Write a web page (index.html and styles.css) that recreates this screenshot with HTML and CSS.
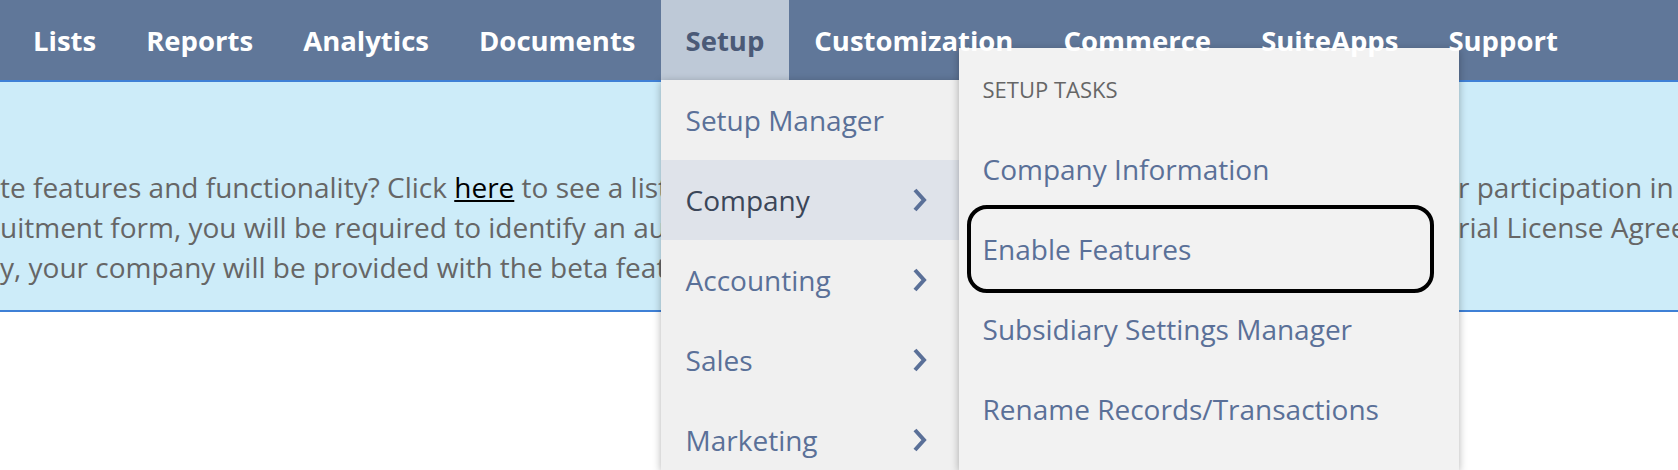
FILE: index.html
```html
<!DOCTYPE html>
<html lang="en">

<head>
    <meta charset="UTF-8">
    <meta name="viewport" content="width=device-width, initial-scale=1.0">
    <title>Setup</title>
    <link rel="stylesheet" href="styles.css">
</head>

<body>
    <header class="topnav">
        <ul class="topnav__list">
            <li class="topnav__item"><a href="#">Lists</a></li>
            <li class="topnav__item"><a href="#">Reports</a></li>
            <li class="topnav__item"><a href="#">Analytics</a></li>
            <li class="topnav__item"><a href="#">Documents</a></li>
            <li class="topnav__item topnav__item--open">
                <a href="#">Setup</a>

                <div class="dropdown">
                    <ul class="dropdown__list">
                        <li class="dropdown__item"><a href="#">Setup Manager</a></li>
                        <li class="dropdown__item dropdown__item--hover">
                            <a href="#">Company
                                <svg class="chevron" viewBox="0 0 14 24"><polyline points="2,2 11,12 2,22" /></svg>
                            </a>
                        </li>
                        <li class="dropdown__item">
                            <a href="#">Accounting
                                <svg class="chevron" viewBox="0 0 14 24"><polyline points="2,2 11,12 2,22" /></svg>
                            </a>
                        </li>
                        <li class="dropdown__item">
                            <a href="#">Sales
                                <svg class="chevron" viewBox="0 0 14 24"><polyline points="2,2 11,12 2,22" /></svg>
                            </a>
                        </li>
                        <li class="dropdown__item">
                            <a href="#">Marketing
                                <svg class="chevron" viewBox="0 0 14 24"><polyline points="2,2 11,12 2,22" /></svg>
                            </a>
                        </li>
                    </ul>

                    <!-- submenu for Company -->
                    <div class="flyout">
                        <div class="flyout__title">Setup Tasks</div>
                        <ul class="flyout__list">
                            <li class="flyout__item"><a href="#">Company Information</a></li>
                            <li class="flyout__item flyout__item--marked"><a href="#">Enable Features</a></li>
                            <li class="flyout__item"><a href="#">Subsidiary Settings Manager</a></li>
                            <li class="flyout__item"><a href="#">Rename Records/Transactions</a></li>
                            <li class="flyout__item"><a href="#">General Preferences</a></li>
                        </ul>
                    </div>
                </div>
            </li>
            <li class="topnav__item"><a href="#">Customization</a></li>
            <li class="topnav__item"><a href="#">Commerce</a></li>
            <li class="topnav__item"><a href="#">SuiteApps</a></li>
            <li class="topnav__item"><a href="#">Support</a></li>
        </ul>
    </header>

    <div class="notice">
        <p class="notice__text">
            <span class="notice__line">
                <span class="notice__lead">Interested in testing NetSui</span>
                <span class="notice__body">te features and functionality? Click <a href="#">here</a> to see a list of the beta features currently available for you</span>
                <span class="notice__tail">r participation in the program.</span>
            </span>
            <span class="notice__line">
                <span class="notice__lead">When you submit the recr</span>
                <span class="notice__body">uitment form, you will be required to identify an authorized party to accept the Beta Software T</span>
                <span class="notice__tail">rial License Agreement.</span>
            </span>
            <span class="notice__line">
                <span class="notice__lead">Upon approval by your authorized part</span>
                <span class="notice__body">y, your company will be provided with the beta features.</span>
            </span>
        </p>
    </div>
</body>

</html>
```

FILE: styles.css
```css
:root {
    --nav: #607799;
    --nav-open: #bec9d7;
    --nav-open-text: #4b5a77;
    --notice: #cdecf9;
    --notice-border: #3f80d6;
    --menu: #f0f0f0;
    --flyout: #f2f2f2;
    --menu-hover: #dfe3ea;
    --link: #5a7098;
    --text: #666666;
    --menu-end: 1458px;
}

* {
    box-sizing: border-box;
}

body {
    margin: 0px;
    font-family: 'Open Sans', sans-serif;
    background-color: #ffffff;
    height: 100vh;
    overflow: hidden;
}

ul {
    list-style-type: none;
    margin: 0px;
    padding: 0px;
}

a {
    text-decoration: none;
}

/* top bar */

.topnav {
    position: relative;
    z-index: 2;
    height: 80px;
    background-color: var(--nav);
}

.topnav__list {
    display: flex;
    height: 100%;
    padding-left: 8px;
}

.topnav__item {
    position: relative;
    display: flex;
}

.topnav__item > a {
    display: flex;
    align-items: center;
    padding: 0px 25px;
    color: #ffffff;
    font-size: 27.5px;
    font-weight: 700;
}

.topnav__item--open > a {
    background-color: var(--nav-open);
    color: var(--nav-open-text);
}

/* setup menu */

.dropdown {
    position: absolute;
    top: 100%;
    left: 0px;
    width: 298px;
    height: calc(100vh - 80px);
    background-color: var(--menu);
    box-shadow: rgba(0, 0, 0, 0.3) 0px 2px 8px 0px;
}

.dropdown__list {
    height: 100%;
    overflow: hidden;
}

.dropdown__item a {
    display: flex;
    align-items: center;
    justify-content: space-between;
    height: 80px;
    padding: 0px 32px 0px 25px;
    color: var(--link);
    font-size: 28px;
}

.dropdown__item--hover a {
    background-color: var(--menu-hover);
    color: #3b4658;
}

.chevron {
    width: 14px;
    height: 24px;
    fill: none;
    stroke: var(--link);
    stroke-width: 4;
}

.flyout {
    position: absolute;
    top: -32px;
    left: 100%;
    width: 500px;
    height: calc(100vh - 48px);
    overflow: hidden;
    background-color: var(--flyout);
    box-shadow: rgba(0, 0, 0, 0.3) 0px 2px 8px 0px;
}

.flyout__title {
    padding: 26px 24px 25px;
    line-height: 30px;
    font-size: 22px;
    color: var(--text);
    text-transform: uppercase;
}

.flyout__item {
    position: relative;
}

.flyout__item a {
    display: flex;
    align-items: center;
    height: 80px;
    padding-left: 24px;
    color: var(--link);
    font-size: 28px;
}

.flyout__item--marked::after {
    content: '';
    position: absolute;
    top: -4px;
    bottom: -4px;
    left: 8px;
    right: 25px;
    border: 4px solid #000000;
    border-radius: 20px;
    pointer-events: none;
}

/* beta notice */

.notice {
    border-top: 2px solid var(--notice-border);
    border-bottom: 2px solid var(--notice-border);
    background-color: var(--notice);
    padding: 85px 0px 23px;
    overflow: hidden;
}

.notice__text {
    margin: 0px;
    color: var(--text);
    font-size: 28px;
    line-height: 40px;
}

.notice__line {
    display: grid;
    grid-template-columns: 0px var(--menu-end) auto;
    white-space: nowrap;
}

.notice__lead {
    display: flex;
    justify-content: flex-end;
}

.notice__body {
    overflow: hidden;
}

.notice__body a {
    color: #000000;
    text-decoration: underline;
}
```
